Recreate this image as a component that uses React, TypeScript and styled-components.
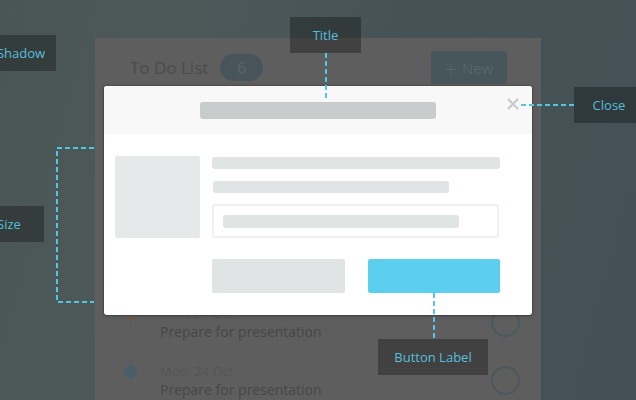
import React from "react";
import styled, { createGlobalStyle } from "styled-components";

const GlobalStyle = createGlobalStyle`
  * { box-sizing: border-box; }
  body {
    margin: 0;
    background: #475457;
    font-family: "Open Sans", "Liberation Sans", sans-serif;
  }
`;

const items = [
  { date: "Mon, 24 Oct", title: "Prepare for presentation", active: false },
  { date: "Mon, 24 Oct", title: "Prepare for presentation", active: false },
  { date: "Mon, 24 Oct", title: "Prepare for presentation", active: false },
  { date: "Mon, 24 Oct", title: "Prepare for presentation", active: true },
  { date: "Mon, 24 Oct", title: "Prepare for presentation", active: false },
];

const App = () => {
  return (
    <>
      <GlobalStyle />
      <Stage>
        <Card>
          <CardHeader>
            <CardTitle>To Do List</CardTitle>
            <Badge>6</Badge>
            <NewButton>
              <span>+</span> New
            </NewButton>
          </CardHeader>
          <Timeline>
            {items.map((item, i) => (
              <Item key={i}>
                <Dot $active={item.active} />
                <ItemText>
                  <ItemDate>{item.date}</ItemDate>
                  <ItemTitle>{item.title}</ItemTitle>
                </ItemText>
                <Check />
              </Item>
            ))}
          </Timeline>
        </Card>

        <Modal>
          <ModalHeader>
            <Bar $w={236} $h={17} $tone="#c9cccd" />
            <CloseIcon width="12" height="12" viewBox="0 0 12 12">
              <path d="M1 1 L11 11 M11 1 L1 11" stroke="#c6cacb" strokeWidth="2" />
            </CloseIcon>
          </ModalHeader>
          <ModalBody>
            <Thumb />
            <Fields>
              <Bar $w={288} $h={12} />
              <Bar $w={236} $h={12} />
              <FakeInput>
                <Bar $w={236} $h={13} />
              </FakeInput>
              <Buttons>
                <GhostButton />
                <PrimaryButton />
              </Buttons>
            </Fields>
          </ModalBody>
        </Modal>

        <Connectors width="636" height="400" viewBox="0 0 636 400">
          <g stroke="#52c6e3" strokeWidth="2" strokeDasharray="5 3" fill="none">
            <path d="M326 53 V99" />
            <path d="M521 105 H574" />
            <path d="M94 148 H57 V302 H94" />
            <path d="M434 293 V339" />
          </g>
        </Connectors>

        <Callout style={{ left: 290, top: 17, width: 71 }}>Title</Callout>
        <Callout style={{ left: 574, top: 87, width: 70 }}>Close</Callout>
        <Callout style={{ left: -14, top: 35, width: 70 }}>Shadow</Callout>
        <Callout style={{ left: -26, top: 206, width: 70 }}>Size</Callout>
        <Callout style={{ left: 378, top: 339, width: 110 }}>Button Label</Callout>
      </Stage>
    </>
  );
};
export default App;

const Stage = styled.div`
  position: relative;
  width: 636px;
  height: 400px;
  overflow: hidden;
  padding: 38px 0 0 95px;
  background: linear-gradient(105deg, #4a5556 0%, #4d5859 25%, #465356 55%, #435055 100%);
`;

const Card = styled.div`
  width: 446px;
  height: 420px;
  background: #5e5e5e;
`;

const CardHeader = styled.div`
  display: flex;
  align-items: center;
  padding: 13px 34px 0 35px;
`;

const CardTitle = styled.h1`
  margin: 0;
  font-size: 17px;
  font-weight: 400;
  color: #4b4b4b;
`;

const Badge = styled.div`
  margin-left: 12px;
  width: 43px;
  height: 27px;
  border-radius: 14px;
  background: #47555a;
  color: #57676c;
  font-size: 16px;
  display: flex;
  align-items: center;
  justify-content: center;
`;

const NewButton = styled.div`
  margin-left: auto;
  width: 76px;
  height: 33px;
  border-radius: 3px;
  background: #47565a;
  color: #56666b;
  font-size: 15px;
  display: flex;
  align-items: center;
  justify-content: center;
  gap: 5px;

  span {
    font-size: 22px;
    font-weight: 300;
    line-height: 1;
  }
`;

const Timeline = styled.div`
  position: relative;
  display: flex;
  flex-direction: column;
  gap: 22px;
  padding: 46px 20px 0 0;

  &::before {
    content: "";
    position: absolute;
    left: 35px;
    top: 52px;
    bottom: 0;
    width: 1px;
    background: #4b5f69;
  }
`;

const Item = styled.div`
  display: grid;
  grid-template-columns: 65px 1fr 30px;
  align-items: start;
  height: 36px;
`;

const Dot = styled.div<{ $active: boolean }>`
  position: relative;
  margin: 3px 0 0 29px;
  width: 13px;
  height: 13px;
  border-radius: 50%;
  background: ${p => (p.$active ? "#6d5a4d" : "#4a5e69")};
`;

const ItemText = styled.div`
  display: flex;
  flex-direction: column;
`;

const ItemDate = styled.div`
  font-size: 13px;
  line-height: 18px;
  color: #555555;
`;

const ItemTitle = styled.div`
  font-size: 14px;
  line-height: 19px;
  color: #474747;
`;

const Check = styled.div`
  align-self: center;
  width: 29px;
  height: 29px;
  border-radius: 50%;
  border: 2px solid #4a595e;
  margin-top: -1px;
`;

const Modal = styled.div`
  position: absolute;
  left: 104px;
  top: 86px;
  width: 428px;
  height: 229px;
  background: #ffffff;
  border-radius: 3px;
  overflow: hidden;
  box-shadow: 0 0 0 1px rgba(0, 0, 0, 0.12), 0 1px 4px rgba(0, 0, 0, 0.25);
`;

const ModalHeader = styled.div`
  position: relative;
  height: 48px;
  background: #f8f8f8;
  display: flex;
  align-items: center;
  justify-content: center;
`;

const CloseIcon = styled.svg`
  position: absolute;
  right: 13px;
  top: 12px;
`;

const ModalBody = styled.div`
  display: grid;
  grid-template-columns: 85px 288px;
  column-gap: 12px;
  padding: 22px 32px 0 11px;
`;

const Thumb = styled.div`
  width: 85px;
  height: 82px;
  border-radius: 2px;
  background: #e6e9ea;
`;

const Fields = styled.div`
  display: flex;
  flex-direction: column;
  padding-top: 1px;

  & > :nth-child(2) {
    margin-top: 12px;
    margin-left: 1px;
  }
  & > :nth-child(3) {
    margin-top: 11px;
  }
`;

const Bar = styled.div<{ $w: number; $h: number; $tone?: string }>`
  width: ${p => p.$w}px;
  height: ${p => p.$h}px;
  border-radius: 3px;
  background: ${p => p.$tone || "#e1e4e5"};
`;

const FakeInput = styled.div`
  width: 287px;
  height: 34px;
  border: 2px solid #eef1f3;
  border-radius: 3px;
  display: flex;
  align-items: center;
  padding-left: 9px;
`;

const Buttons = styled.div`
  display: grid;
  grid-template-columns: 133px 132px;
  column-gap: 23px;
  margin-top: 21px;
`;

const GhostButton = styled.div`
  height: 34px;
  border-radius: 2px;
  background: #e1e4e5;
`;

const PrimaryButton = styled(GhostButton)`
  background: #5bcfed;
`;

const Connectors = styled.svg`
  position: absolute;
  left: 0;
  top: 0;
  pointer-events: none;
`;

const Callout = styled.div`
  position: absolute;
  height: 36px;
  background: rgba(0, 0, 0, 0.3);
  color: #55bfdc;
  font-family: "Open Sans", "Liberation Sans", sans-serif;
  font-size: 13px;
  display: flex;
  align-items: center;
  justify-content: center;
  white-space: nowrap;
`;
